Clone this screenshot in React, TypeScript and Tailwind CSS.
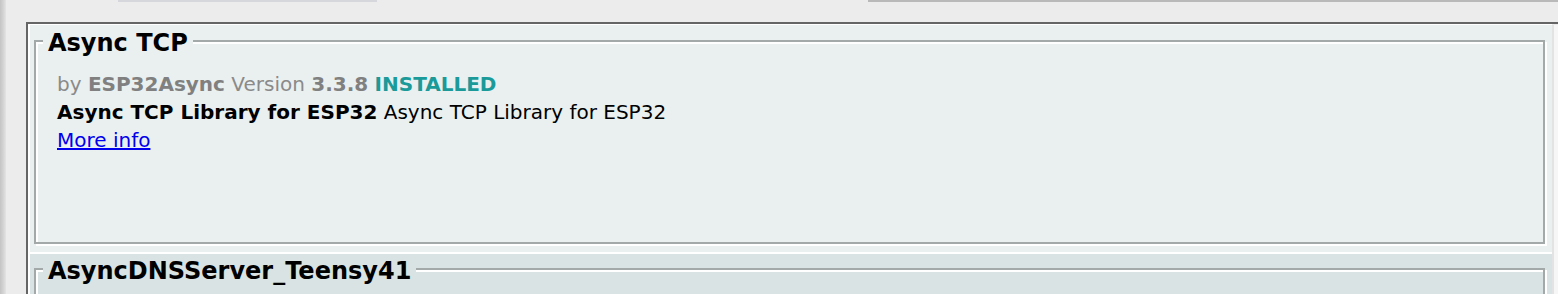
import React from 'react';

interface LibraryEntry {
  name: string;
  author?: string;
  version?: string;
  installed?: boolean;
  sentence?: string;
  paragraph?: string;
  shade: 'light' | 'dark';
}

const libraries: LibraryEntry[] = [
  {
    name: 'Async TCP',
    author: 'ESP32Async',
    version: '3.3.8',
    installed: true,
    sentence: 'Async TCP Library for ESP32',
    paragraph: 'Async TCP Library for ESP32',
    shade: 'light',
  },
  { name: 'AsyncDNSServer_Teensy41', shade: 'dark' },
];

export default function App() {
  return (
    <div
      className="w-[1558px] h-[294px] bg-[#ececec] flex overflow-hidden"
      style={{ fontFamily: '"DejaVu Sans", "Liberation Sans", sans-serif' }}
    >
      {/* window edge */}
      <div className="w-[6px] shrink-0 bg-gradient-to-r from-[#c4c4c4] via-[#d2d2d2] to-[#e4e4e4]" />

      <div className="flex-1 flex flex-col min-w-0">
        {/* bottoms of the filter controls above */}
        <div className="h-[22px] shrink-0 flex items-start">
          <div className="ml-[112px] w-[259px] h-[2px] bg-[#d6d7dc]" />
          <div className="ml-[491px] flex-1 h-[2px] bg-[#b9b9b9]" />
        </div>

        {/* library list pane */}
        <div className="ml-[20px] flex-1 flex border-l-2 border-t-2 border-[#656565] min-h-0">
          <div className="flex-1 bg-white pt-[1px] pl-[2px] flex flex-col gap-[2px] min-w-0">
            {libraries.map((lib, i) => (
              <LibraryItem key={lib.name} lib={lib} first={i === 0} />
            ))}
          </div>
          {/* scrollbar track */}
          <div className="w-[6px] shrink-0 mt-[1px] border-l-2 border-[#e3e3e3] bg-[#f6f6f6]" />
        </div>
      </div>
    </div>
  );
}

function LibraryItem({ lib, first }: { lib: LibraryEntry; first: boolean }) {
  const bg = lib.shade === 'light' ? 'bg-[#eaf0f0]' : 'bg-[#d9e3e3]';

  return (
    <div className={`${bg} shrink-0 ${first ? 'h-[227px] pt-[15px]' : 'h-[80px] pt-[14px]'} pl-[4px] pr-[7px] pb-[8px]`}>
      <div className="relative h-full border-2 border-[#a3a9a9] shadow-[inset_2px_2px_0_#ffffff,2px_2px_0_#ffffff]">
        <span
          className={`absolute top-[-13px] left-[7px] px-[5px] ${bg} text-[24px] leading-[28px] font-bold text-black`}
        >
          {lib.name}
        </span>

        {lib.author && (
          <div className="pt-[28px] pl-[21px] text-[20px] leading-[28px]">
            <div className="text-[#8a8a8a] whitespace-nowrap">
              by <span className="font-bold text-[#808080]">{lib.author}</span> Version{' '}
              <span className="font-bold text-[#808080]">{lib.version}</span>{' '}
              {lib.installed && <span className="font-bold text-[#1b9a9a]">INSTALLED</span>}
            </div>
            <div className="text-black whitespace-nowrap">
              <span className="font-bold">{lib.sentence}</span> {lib.paragraph}
            </div>
            <div>
              <a href="#" className="text-[#0000ee] underline">
                More info
              </a>
            </div>
          </div>
        )}
      </div>
    </div>
  );
}
